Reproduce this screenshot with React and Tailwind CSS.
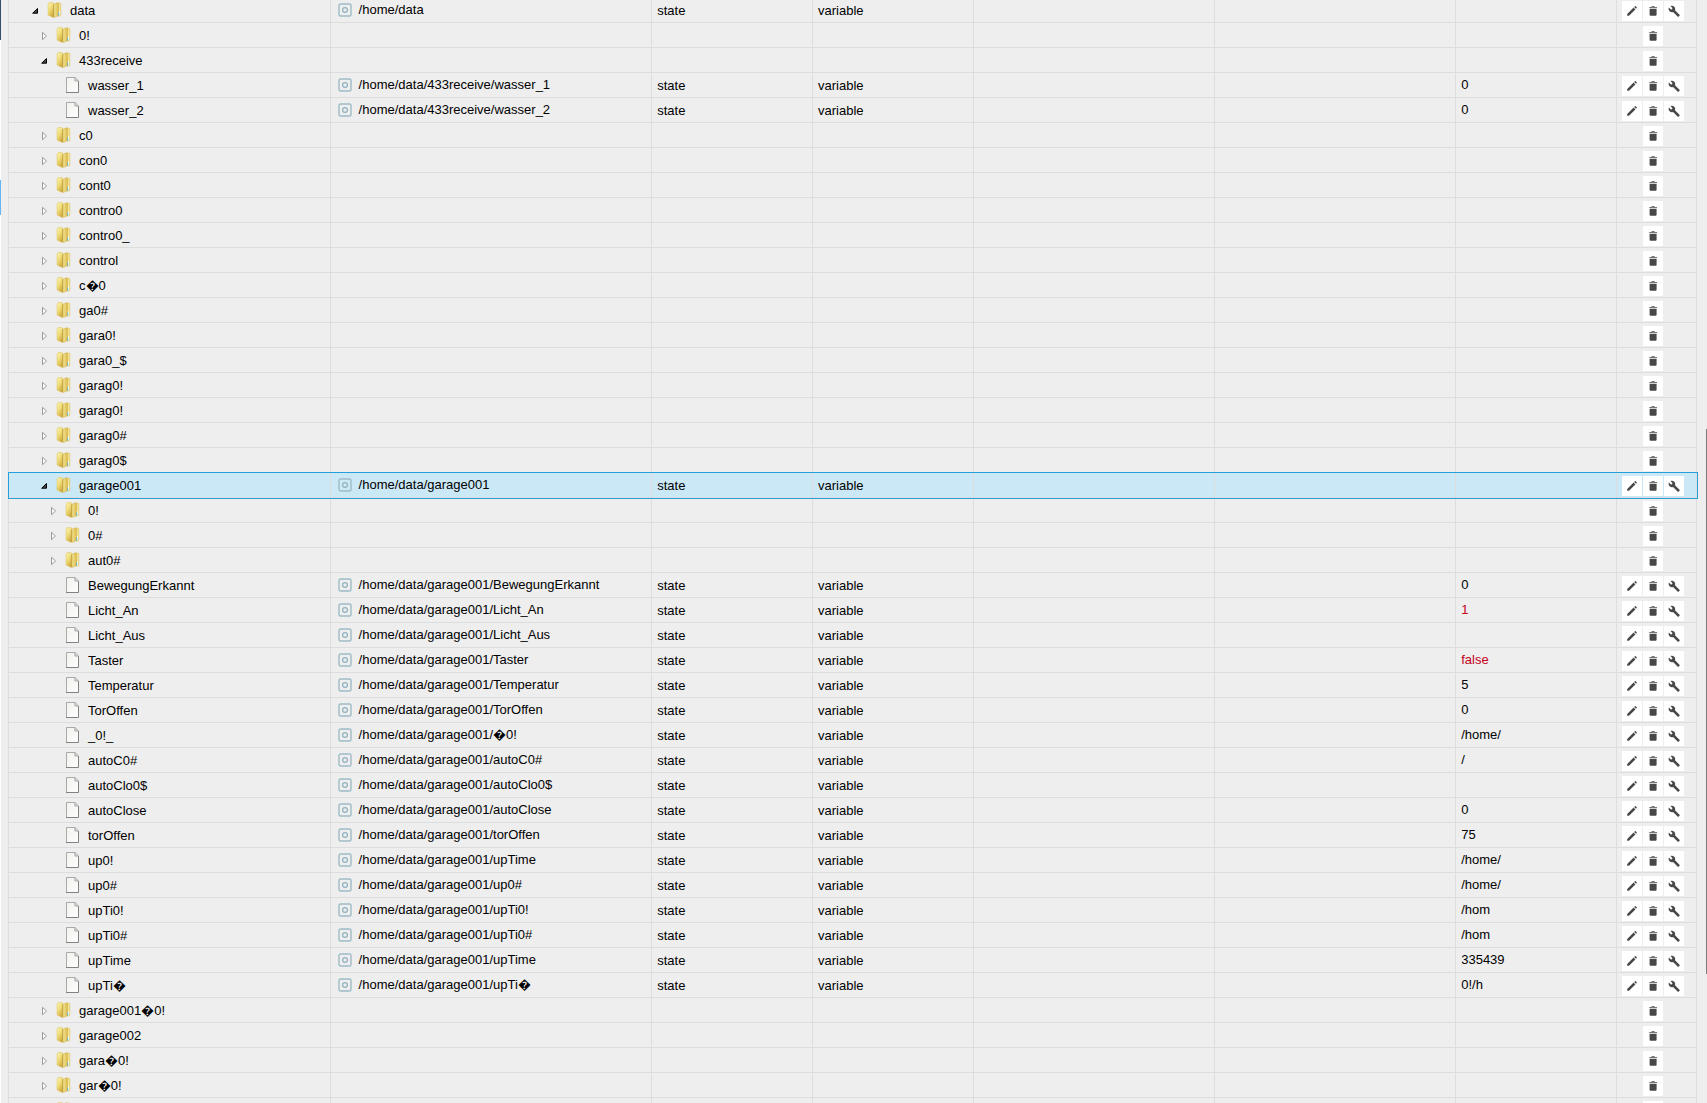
import { useState } from "react";

const PATH = "/home/data/garage001/";

const ROWS = [
  { name: "data", level: 0, open: true, path: "/home/data" },
  { name: "0!", level: 1, open: false },
  { name: "433receive", level: 1, open: true },
  { name: "wasser_1", level: 2, path: "/home/data/433receive/wasser_1", value: "0" },
  { name: "wasser_2", level: 2, path: "/home/data/433receive/wasser_2", value: "0" },
  { name: "c0", level: 1, open: false },
  { name: "con0", level: 1, open: false },
  { name: "cont0", level: 1, open: false },
  { name: "contro0", level: 1, open: false },
  { name: "contro0_", level: 1, open: false },
  { name: "control", level: 1, open: false },
  { name: "c\uFFFD0", level: 1, open: false },
  { name: "ga0#", level: 1, open: false },
  { name: "gara0!", level: 1, open: false },
  { name: "gara0_$", level: 1, open: false },
  { name: "garag0!", level: 1, open: false },
  { name: "garag0!", level: 1, open: false },
  { name: "garag0#", level: 1, open: false },
  { name: "garag0$", level: 1, open: false },
  { name: "garage001", level: 1, open: true, path: "/home/data/garage001" },
  { name: "0!", level: 2, open: false },
  { name: "0#", level: 2, open: false },
  { name: "aut0#", level: 2, open: false },
  { name: "BewegungErkannt", level: 2, path: PATH + "BewegungErkannt", value: "0" },
  { name: "Licht_An", level: 2, path: PATH + "Licht_An", value: "1", changed: true },
  { name: "Licht_Aus", level: 2, path: PATH + "Licht_Aus" },
  { name: "Taster", level: 2, path: PATH + "Taster", value: "false", changed: true },
  { name: "Temperatur", level: 2, path: PATH + "Temperatur", value: "5" },
  { name: "TorOffen", level: 2, path: PATH + "TorOffen", value: "0" },
  { name: "_0!_", level: 2, path: PATH + "\uFFFD0!", value: "/home/" },
  { name: "autoC0#", level: 2, path: PATH + "autoC0#", value: "/" },
  { name: "autoClo0$", level: 2, path: PATH + "autoClo0$" },
  { name: "autoClose", level: 2, path: PATH + "autoClose", value: "0" },
  { name: "torOffen", level: 2, path: PATH + "torOffen", value: "75" },
  { name: "up0!", level: 2, path: PATH + "upTime", value: "/home/" },
  { name: "up0#", level: 2, path: PATH + "up0#", value: "/home/" },
  { name: "upTi0!", level: 2, path: PATH + "upTi0!", value: "/hom" },
  { name: "upTi0#", level: 2, path: PATH + "upTi0#", value: "/hom" },
  { name: "upTime", level: 2, path: PATH + "upTime", value: "335439" },
  { name: "upTi\uFFFD", level: 2, path: PATH + "upTi\uFFFD", value: "0!/h" },
  { name: "garage001\uFFFD0!", level: 1, open: false },
  { name: "garage002", level: 1, open: false },
  { name: "gara\uFFFD0!", level: 1, open: false },
  { name: "gar\uFFFD0!", level: 1, open: false },
  { name: "", level: 1, open: false },
];

const INDENT = ["pl-5", "pl-[29px]", "pl-[38px]"];

const CELL = "border-r border-[#dddddd] px-[5px] leading-[25px] whitespace-nowrap overflow-hidden";

function FolderIcon() {
  return (
    <svg width="16" height="16" viewBox="0 0 16 16" aria-hidden="true">
      <defs>
        <linearGradient id="folder" x1="0" y1="0" x2="0.6" y2="1">
          <stop offset="0" stopColor="#fbf4b4" />
          <stop offset="0.5" stopColor="#f0dc78" />
          <stop offset="1" stopColor="#cfa93e" />
        </linearGradient>
        <linearGradient id="folderFront" x1="0" y1="0" x2="1" y2="0">
          <stop offset="0" stopColor="#f8eb9a" />
          <stop offset="1" stopColor="#d8b748" />
        </linearGradient>
      </defs>
      <path d="M9.500 1h3.700l.6.7v11.800l-.6.5H9.500z" fill="#f4e28c" stroke="#d9bd5c" strokeWidth=".5" />
      <path d="M1 2 2 .6h4.200L7 2v13l-1 .4L1 13z" fill="url(#folder)" stroke="#dcc566" strokeWidth=".5" />
      <path d="M6.800 2.300 10.500.8l1 .6v12l-4 2.200-.7-.4z" fill="url(#folderFront)" stroke="#c9a648" strokeWidth=".4" />
      <path d="M6.700 2.300v12.800" stroke="#b8963a" strokeWidth=".7" />
      <path d="M12.500 9.200v4" stroke="#fff" strokeWidth="1" />
      <path d="M11.700 10.500v3" stroke="#4fb6dc" strokeWidth="1" />
    </svg>
  );
}

function FileIcon() {
  return (
    <svg width="16" height="16" viewBox="0 0 16 16" aria-hidden="true">
      <defs>
        <linearGradient id="page" x1="0" y1="0" x2="1" y2="1">
          <stop offset="0" stopColor="#f1f3ed" />
          <stop offset="1" stopColor="#fefefe" />
        </linearGradient>
      </defs>
      <path d="M1.500.5h8.500l3.500 3.500v11.500h-12z" fill="url(#page)" />
      <path d="M1.500 15.500V.5H10" fill="none" stroke="#a9a9a9" />
      <path d="M1 15.500h12.500V4" fill="none" stroke="#828282" />
      <path d="M9.900.5V4h3.600z" fill="#e4e4e4" stroke="#a0a0a0" strokeWidth=".9" />
    </svg>
  );
}

function StateIcon() {
  return (
    <svg width="14" height="14" viewBox="0 0 14 14" fill="none" aria-hidden="true">
      <rect x="1" y="1" width="12" height="12" rx="1.5" stroke="#9fbcc6" strokeWidth="1.4" />
      <circle cx="7" cy="7" r="2.4" stroke="#8fb1bc" strokeWidth="1.2" />
    </svg>
  );
}

function Expander({ open, onClick }) {
  return (
    <button type="button" aria-label={open ? "Collapse" : "Expand"} onClick={onClick} className="w-4 h-4 shrink-0">
      <svg width="16" height="16" viewBox="0 0 16 16">
        {open ? (
          <path d="M8.500 6.500v4.700H3.700z" fill="#444" stroke="#000" />
        ) : (
          <path d="M4.500 5.300v7.400L8.500 9z" fill="#fff" stroke="#9a9a9a" />
        )}
      </svg>
    </button>
  );
}

function ActionButton({ label, children }) {
  return (
    <button type="button" aria-label={label} className="w-5 h-5 bg-white flex items-center justify-center">
      <svg width="12" height="12" viewBox="0 0 12 12" fill="#484848" aria-hidden="true">
        {children}
      </svg>
    </button>
  );
}

function Row({ row, selected, onSelect, onToggle }) {
  const isFolder = row.open !== undefined;

  return (
    <tr
      onClick={onSelect}
      aria-selected={selected}
      className={`grid grid-cols-[20fr_20fr_10fr_10fr_15fr_15fr_10fr_80px] h-[25px] border-b border-[#dddddd] ${
        selected ? "relative z-10 bg-[#cbe8f6] outline outline-[#26a0da]" : ""
      }`}
    >
      <td className={`${CELL} ${INDENT[row.level]}`}>
        <div className="flex items-center h-6">
          {isFolder ? <Expander open={row.open} onClick={onToggle} /> : <span className="w-4" />}
          <span className="w-4 ml-0.5 mr-[7px]">{isFolder ? <FolderIcon /> : <FileIcon />}</span>
          <span className="leading-normal pt-px">{row.name}</span>
        </div>
      </td>
      <td className={CELL}>
        {row.path && (
          <div className="flex items-center h-[23px] pl-0.5 gap-[7px]">
            <StateIcon />
            <span className="leading-normal">{row.path}</span>
          </div>
        )}
      </td>
      <td className={CELL}>{row.path && "state"}</td>
      <td className={CELL}>{row.path && "variable"}</td>
      <td className={CELL} />
      <td className={CELL} />
      <td className={`${CELL} ${row.changed ? "text-[#c4001a]" : ""}`}>
        <div className="leading-[23px]">{row.value}</div>
      </td>
      <td className="border-r border-[#dddddd] pl-[5px] pt-[3px]">
        <div className="grid grid-cols-[20px_20px_20px] gap-px">
          {row.path ? (
            <ActionButton label={`Edit ${row.name}`}>
              <path d="M1.200 9 7.600 2.600l1.800 1.800L3 10.800H1.200zM8.200 2l.7-.7q.4-.4.8 0l1 1q.4.400 0 .8l-.7.7z" />
            </ActionButton>
          ) : (
            <span />
          )}
          <ActionButton label={`Delete ${row.name}`}>
            <path d="M2.600 3.700h7v6.100q0 1-1 1h-5q-1 0-1-1z" />
            <path d="M2.200 1.900h2l.7-.8h2.400l.7.8h2V3H2.200z" fill="#777" />
          </ActionButton>
          {row.path && (
            <ActionButton label={`Configure ${row.name}`}>
              <path d="M11.700 10 7 5.200c.4-1.200.2-2.500-.8-3.400C5.200.7 3.700.5 2.500 1.100l2.100 2.100-1.500 1.500L.9 2.600C.3 3.800.6 5.300 1.600 6.300c1 .9 2.300 1.200 3.500.7l4.700 4.800c.2.200.5.200.7 0l1.200-1.200c.2-.1.2-.4 0-.6z" />
            </ActionButton>
          )}
        </div>
      </td>
    </tr>
  );
}

export default function App() {
  const [rows, setRows] = useState(ROWS);
  const [selected, setSelected] = useState(19);

  const toggle = (index) => {
    setRows((list) => list.map((r, i) => (i === index ? { ...r, open: !r.open } : r)));
  };

  return (
    <div className="flex h-screen overflow-hidden bg-[#eeeeee] text-black text-[13px] font-['Liberation_Sans',Arial,sans-serif]">
      {/* edge of the side menu */}
      <div className="w-px shrink-0 bg-white">
        <div className="h-10 bg-[#34506e]" />
        <div className="h-[140px]" />
        <div className="h-[35px] bg-[#64b5f6]" />
      </div>

      <div className="grow min-w-0 pl-[7px] pr-[9px]">
        <table className="block w-full border-l border-[#dddddd] -mt-0.5">
          <tbody className="block">
            {rows.map((row, i) => (
              <Row
                key={i}
                row={row}
                selected={i === selected}
                onSelect={() => setSelected(i)}
                onToggle={() => toggle(i)}
              />
            ))}
          </tbody>
        </table>
      </div>

      {/* scroll bar */}
      <div className="w-px shrink-0 pt-[429px]">
        <div className="h-[545px] bg-[#7d7d7d]" />
      </div>
    </div>
  );
}
